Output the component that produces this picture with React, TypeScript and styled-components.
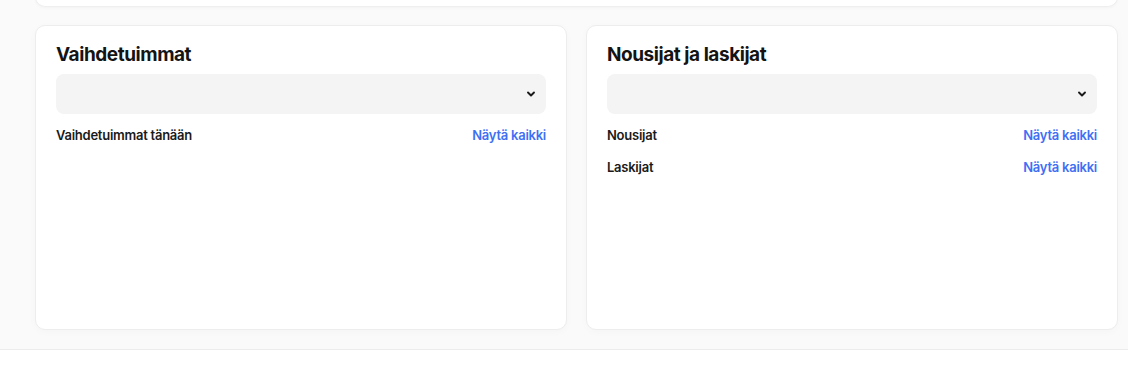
import React from "react";
import styled, { createGlobalStyle } from "styled-components";

const Global = createGlobalStyle`
  html, body { margin: 0; padding: 0; background: #ffffff; }
  body { font-family: Inter, "Noto Sans", Arial, sans-serif; color: #1a1a1a; }
  * { box-sizing: border-box; }
`;

const Section = styled.section`
  background: #fafafa;
  border-bottom: 1px solid #ececec;
  padding: 0 10px 19px 35px;
  height: 350px;
  overflow: hidden;
`;

const TopCard = styled.div`
  height: 6px;
  margin-top: -10px;
  padding-top: 10px;
  box-sizing: content-box;
  background: #fff;
  border: 1px solid #efefef;
  border-top: none;
  border-radius: 0 0 10px 10px;
  box-shadow: 0 1px 3px rgba(0, 0, 0, 0.03);
`;

const Grid = styled.div`
  display: grid;
  grid-template-columns: 1fr 1fr;
  column-gap: 19px;
  margin-top: 18px;
`;

const Card = styled.div`
  background: #fff;
  border: 1px solid #ededed;
  border-radius: 10px;
  height: 305px;
  padding: 16px 20px 20px 20px;
  box-shadow: 0 2px 8px rgba(0, 0, 0, 0.025);
`;

const Title = styled.h2`
  margin: 0;
  font-size: 19px;
  font-weight: 700;
  letter-spacing: -0.45px;
  line-height: 26px;
  color: #141414;
`;

const Select = styled.div`
  margin-top: 6px;
  height: 40px;
  border-radius: 8px;
  background: #f4f4f4;
  display: flex;
  align-items: center;
  justify-content: flex-end;
  padding-right: 9px;
  color: #1a1a1a;
`;

const Rows = styled.div`
  margin-top: 5px;
  display: flex;
  flex-direction: column;
`;

const Row = styled.div`
  height: 32px;
  display: flex;
  align-items: center;
  justify-content: space-between;
  font-size: 13px;
  font-weight: 600;
  letter-spacing: -0.25px;
`;

const Label = styled.span`
  color: #1a1a1a;
`;

const Link = styled.a`
  color: #3f6ff5;
  text-decoration: none;
`;

const Chevron = () => (
  <svg width="12" height="12" viewBox="0 0 24 24" fill="none" stroke="currentColor" strokeWidth="3.8" strokeLinecap="round" strokeLinejoin="round">
    <path d="M6 9l6 6 6-6" />
  </svg>
);

const Panel = ({ title, rows }: { title: string; rows: string[] }) => (
  <Card>
    <Title>{title}</Title>
    <Select>
      <Chevron />
    </Select>
    <Rows>
      {rows.map((r) => (
        <Row key={r}>
          <Label>{r}</Label>
          <Link href="#">Näytä kaikki</Link>
        </Row>
      ))}
    </Rows>
  </Card>
);

export default function App() {
  return (
    <>
      <Global />
      <Section>
        <TopCard />
        <Grid>
          <Panel title="Vaihdetuimmat" rows={["Vaihdetuimmat tänään"]} />
          <Panel title="Nousijat ja laskijat" rows={["Nousijat", "Laskijat"]} />
        </Grid>
      </Section>
    </>
  );
}
